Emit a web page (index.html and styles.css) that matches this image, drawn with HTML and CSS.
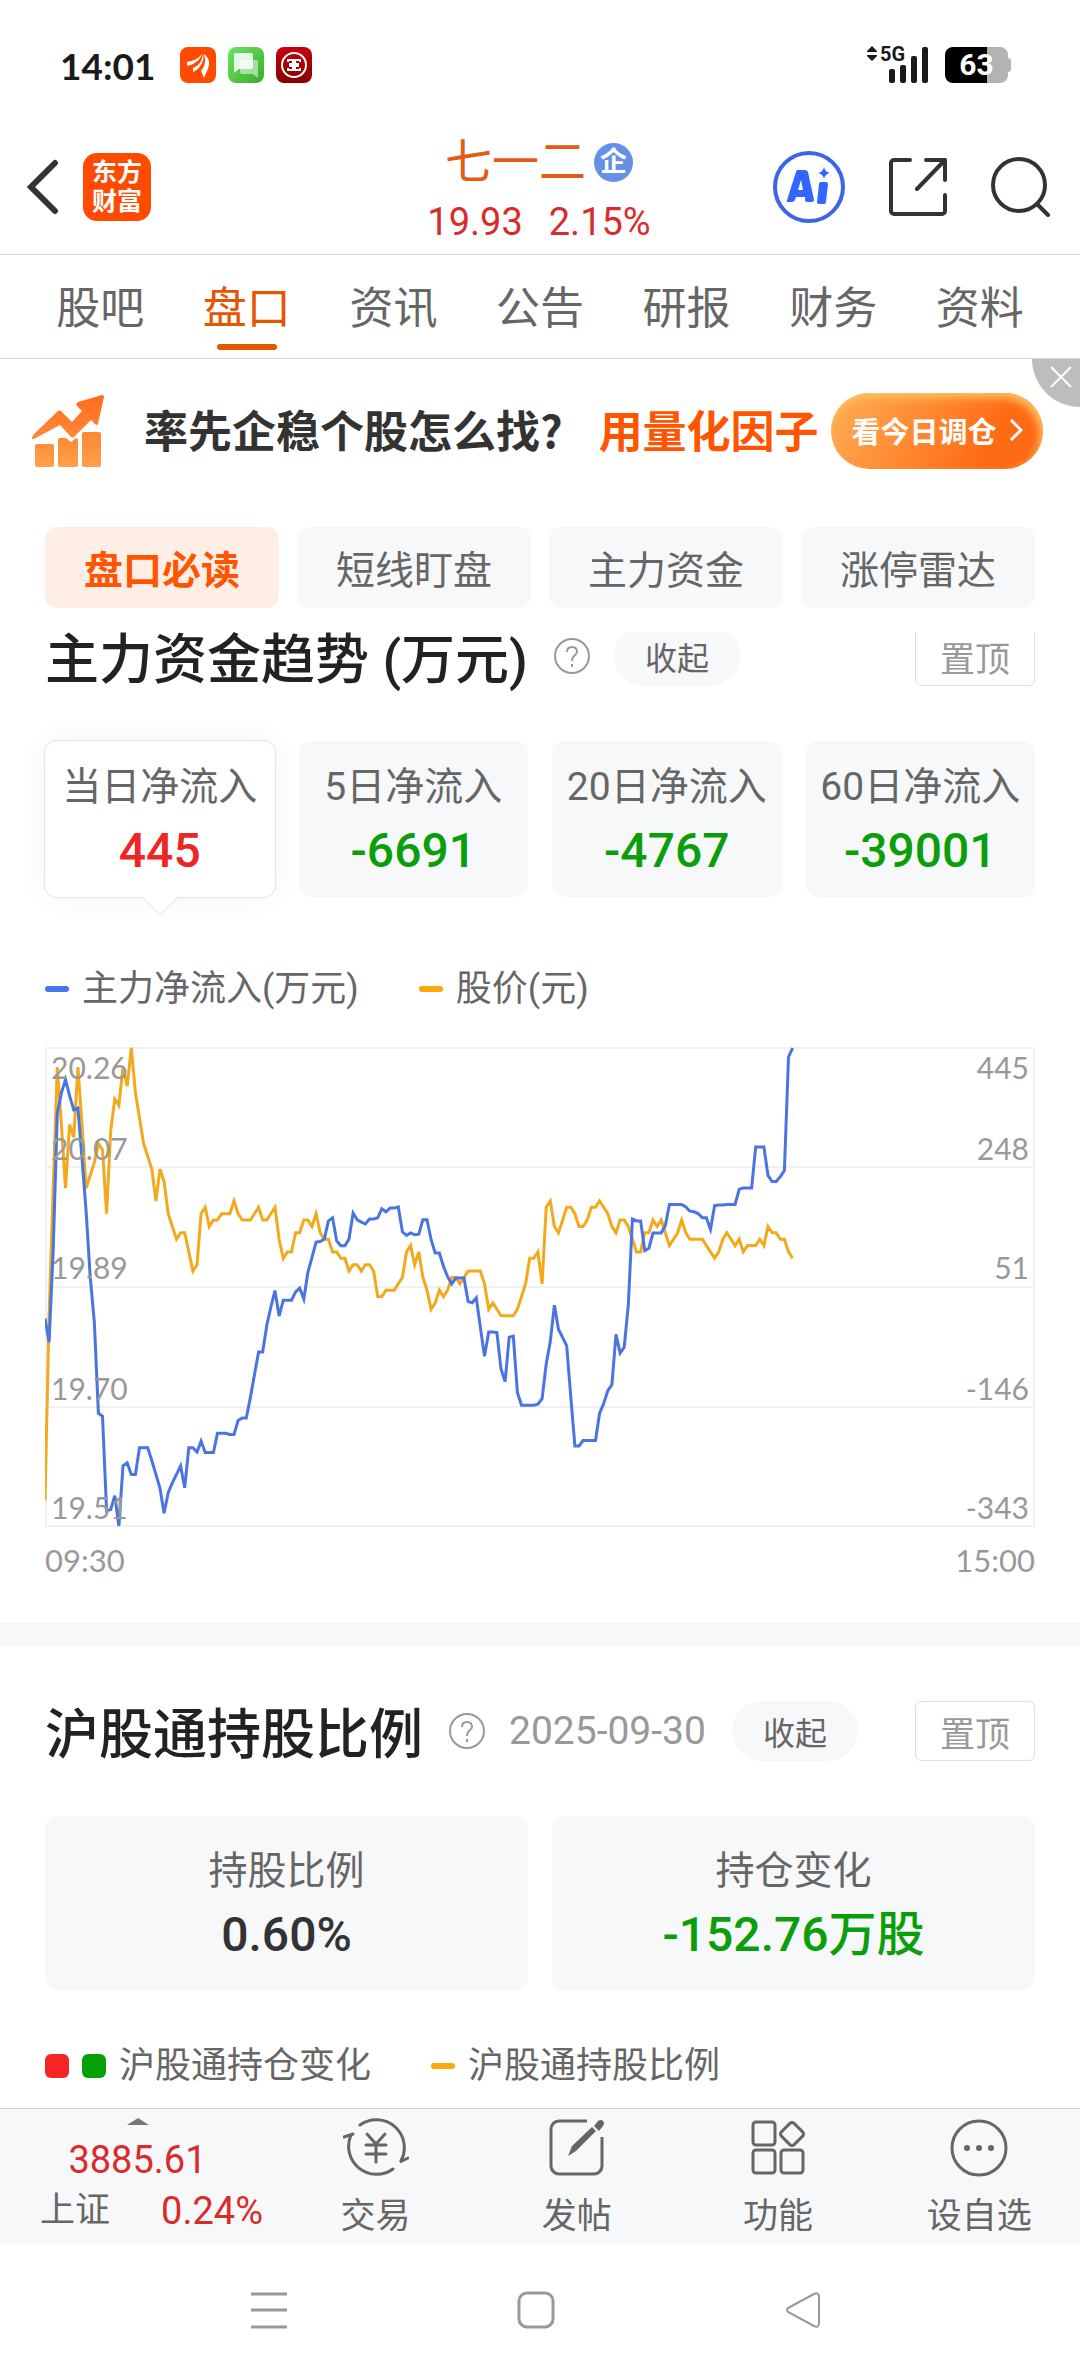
FILE: index.html
```html
<!DOCTYPE html>
<html lang="zh-CN">
<head>
    <meta charset="UTF-8">
    <title>七一二 - 盘口</title>
    <meta name="viewport" content="width=device-width, initial-scale=1">
    <link rel="stylesheet" href="styles.css">
</head>
<body>
    <div class="status-bar">
        <span class="clock">14:01</span>
        <svg class="app-icon" viewBox="0 0 36 36">
            <rect width="36" height="36" rx="8" fill="#ff4a00"/>
            <path d="M7 15c6-1 11-3 15-8-2 6-7 10-15 12zM13 21c6-2 9-7 10-14 2 7-3 15-10 18zM21 24c4-5 5-10 3-17 5 4 7 9 3 17l-3 7z" fill="#fff"/>
        </svg>
        <svg class="app-icon" viewBox="0 0 36 36">
            <defs>
                <linearGradient id="msgGreen" x1="0" y1="0" x2="1" y2="1">
                    <stop offset="0" stop-color="#6be364"/>
                    <stop offset="1" stop-color="#3aae29"/>
                </linearGradient>
            </defs>
            <rect width="36" height="36" rx="8" fill="url(#msgGreen)"/>
            <path d="M12 13h16a2 2 0 0 1 2 2v16l-5-4H14a2 2 0 0 1-2-2z" fill="#fff" opacity=".5"/>
            <path d="M8 6h15a2 2 0 0 1 2 2v12a2 2 0 0 1-2 2H11l-5 4V8a2 2 0 0 1 2-2z" fill="#fff" opacity=".85"/>
        </svg>
        <svg class="app-icon" viewBox="0 0 36 36">
            <defs>
                <linearGradient id="bankRed" x1="0" y1="0" x2="0" y2="1">
                    <stop offset="0" stop-color="#c8000f"/>
                    <stop offset="1" stop-color="#860000"/>
                </linearGradient>
            </defs>
            <rect width="36" height="36" rx="8" fill="url(#bankRed)"/>
            <circle cx="18" cy="18" r="12" fill="none" stroke="#fff" stroke-width="2"/>
            <path d="M12 13h5v4h-4M13 19h4v4h-5M24 13h-5v4h4M23 19h-4v4h5M12 12v3M24 12v3M12 24v-3M24 24v-3" fill="none" stroke="#fff" stroke-width="2"/>
        </svg>
        <span class="spacer"></span>
        <svg class="signal" viewBox="0 -5 62 50" fill="#1a1a1a">
            <path d="M5 1l5 5H0zM5 16l5-5H0z"/>
            <path d="M0 6h10v1H0zM0 10h10v1H0z"/>
            <text x="13" y="16" class="signal-text">5G</text>
            <rect x="22" y="24" width="6" height="14" rx="2"/>
            <rect x="33" y="20" width="6" height="18" rx="2"/>
            <rect x="44" y="11" width="6" height="27" rx="2"/>
            <rect x="55" y="2" width="6" height="36" rx="2"/>
        </svg>
        <span class="battery">63</span>
    </div>

    <header class="top-bar">
        <div class="top-left">
            <button class="icon-btn" aria-label="返回">
                <svg width="32" height="56" viewBox="0 0 32 56"><path d="M28 4L4 28l24 24" fill="none" stroke="#333" stroke-width="6" stroke-linecap="round"/></svg>
            </button>
            <a href="#" class="logo"><span>东方</span><span>财富</span></a>
        </div>
        <div class="stock">
            <h1 class="stock-name">七一二<span class="badge">企</span></h1>
            <div class="stock-price"><span>19.93</span><span>2.15%</span></div>
        </div>
        <div class="top-right">
            <button class="icon-btn" aria-label="AI">
                <svg width="72" height="72" viewBox="0 0 72 72">
                    <circle cx="36" cy="36" r="34" fill="none" stroke="#3b66e8" stroke-width="4"/>
                    <path d="M25 19h7q2 0 3 2l6 28q0 2-2 2h-5q-2 0-2-2v-3h-9l-1 3q-1 2-3 2h-4q-2 0-1-2l9-28q0-2 2-2zM28 29l-3 10h5z" fill="#3366ff" fill-rule="evenodd"/>
                    <path d="M48 31h5q2 0 2 2l-2 18q0 2-2 2h-5q-2 0-2-2l2-18q0-2 2-2zM51 16q1 5 6 6-5 1-6 6-1-5-6-6 5-1 6-6z" fill="#3366ff"/>
                </svg>
            </button>
            <button class="icon-btn" aria-label="分享">
                <svg width="58" height="58" viewBox="0 0 58 58" fill="none" stroke="#333" stroke-width="4" stroke-linecap="round" stroke-linejoin="round">
                    <path d="M21 2H5a3 3 0 0 0-3 3v48a3 3 0 0 0 3 3h48a3 3 0 0 0 3-3V37M37 2h19v20M56 2L28 31"/>
                </svg>
            </button>
            <button class="icon-btn" aria-label="搜索">
                <svg width="60" height="60" viewBox="0 0 60 60" fill="none" stroke="#333" stroke-width="4" stroke-linecap="round">
                    <circle cx="28" cy="28" r="26"/>
                    <path d="M46 47l11 11"/>
                </svg>
            </button>
        </div>
    </header>

    <nav class="tabs">
        <a href="#">股吧</a>
        <a href="#" class="active">盘口</a>
        <a href="#">资讯</a>
        <a href="#">公告</a>
        <a href="#">研报</a>
        <a href="#">财务</a>
        <a href="#">资料</a>
    </nav>

    <div class="banner">
        <svg class="banner-icon" viewBox="0 0 72 72">
            <defs>
                <linearGradient id="bannerOrange" x1="0" y1="0" x2="0" y2="1">
                    <stop offset="0" stop-color="#ff6a1c"/>
                    <stop offset="1" stop-color="#ffa04a"/>
                </linearGradient>
            </defs>
            <path d="M70 0q2 0 2 2l-6 27q-1 2-3 0l-4-4-17 17q-1 1-3 0L28 30 2 44q-2 1-2-1 0-2 2-4l24-23q1-1 3 0l11 11 10-11-5-5q-2-2 1-4zM5 49h15q2 0 2 2v19q0 2-2 2H5q-2 0-2-2V51q0-2 2-2zM28 43h6l5 4 5-4q2 0 2 2v25q0 2-2 2H28q-2 0-2-2V45q0-2 2-2zM52 37h15q2 0 2 2v31q0 2-2 2H52q-2 0-2-2V39q0-2 2-2z" fill="url(#bannerOrange)"/>
        </svg>
        <p class="banner-text">率先企稳个股怎么找? <em>用量化因子</em></p>
        <a href="#" class="banner-btn">看今日调仓
            <svg width="14" height="24" viewBox="0 0 14 24"><path d="M2 2l10 10L2 22" fill="none" stroke="#fff" stroke-width="3"/></svg>
        </a>
        <button class="banner-close" aria-label="关闭">
            <svg width="22" height="22" viewBox="0 0 22 22"><path d="M1 1l20 20M21 1L1 21" stroke="#fff" stroke-width="2"/></svg>
        </button>
    </div>

    <div class="chips">
        <button class="chip active">盘口必读</button>
        <button class="chip">短线盯盘</button>
        <button class="chip">主力资金</button>
        <button class="chip">涨停雷达</button>
    </div>

    <main>
        <section class="panel panel-trend">
            <div class="panel-head">
                <h2>主力资金趋势 (万元)</h2>
                <svg class="help" viewBox="0 0 36 36" fill="none" stroke="#999" stroke-width="2">
                    <circle cx="18" cy="18" r="17"/>
                    <path d="M13 14q0-5 5-5t5 5q0 2-3 4-2 2-2 5M18 26v3"/>
                </svg>
                <button class="fold">收起</button>
                <button class="pin">置顶</button>
            </div>
            <div class="flow-cards">
                <button class="card selected"><span>当日净流入</span><strong class="up">445</strong></button>
                <button class="card"><span>5日净流入</span><strong class="down">-6691</strong></button>
                <button class="card"><span>20日净流入</span><strong class="down">-4767</strong></button>
                <button class="card"><span>60日净流入</span><strong class="down">-39001</strong></button>
            </div>
            <div class="legend">
                <span class="legend-item"><i class="dash blue"></i>主力净流入(万元)</span>
                <span class="legend-item"><i class="dash orange"></i>股价(元)</span>
            </div>
            <svg class="chart" viewBox="0 0 990 480">
                <path class="grid" d="M1 1h988v478H1zM1 120h988M1 240h988M1 360h988"/>
                <polyline id="priceLine" class="line price"/>
                <polyline id="flowLine" class="line flow"/>
                <g class="axis">
                    <text x="6" y="32">20.26</text>
                    <text x="6" y="113">20.07</text>
                    <text x="6" y="232">19.89</text>
                    <text x="6" y="353">19.70</text>
                    <text x="6" y="472">19.51</text>
                </g>
                <g class="axis axis-right">
                    <text x="984" y="32">445</text>
                    <text x="984" y="113">248</text>
                    <text x="984" y="232">51</text>
                    <text x="984" y="353">-146</text>
                    <text x="984" y="472">-343</text>
                </g>
            </svg>
            <div class="times"><span>09:30</span><span>15:00</span></div>
        </section>

        <section class="panel panel-holding">
            <div class="panel-head">
                <h2>沪股通持股比例</h2>
                <svg class="help" viewBox="0 0 36 36" fill="none" stroke="#999" stroke-width="2">
                    <circle cx="18" cy="18" r="17"/>
                    <path d="M13 14q0-5 5-5t5 5q0 2-3 4-2 2-2 5M18 26v3"/>
                </svg>
                <time>2025-09-30</time>
                <button class="fold">收起</button>
                <button class="pin">置顶</button>
            </div>
            <div class="holding-cards">
                <div class="card"><span>持股比例</span><strong>0.60%</strong></div>
                <div class="card"><span>持仓变化</span><strong class="down">-152.76万股</strong></div>
            </div>
            <div class="legend">
                <span class="legend-item"><i class="square red"></i><i class="square green"></i>沪股通持仓变化</span>
                <span class="legend-item"><i class="dash orange"></i>沪股通持股比例</span>
            </div>
        </section>
    </main>

    <footer class="tool-bar">
        <a href="#" class="index-box">
            <svg width="22" height="7" viewBox="0 0 22 7"><path d="M0 7L11 0l11 7z" fill="#777"/></svg>
            <span class="index-value">3885.61</span>
            <span class="index-row"><span>上证</span><span class="index-change">0.24%</span></span>
        </a>
        <a href="#" class="tool">
            <svg width="66" height="60" viewBox="0 0 66 60" fill="none" stroke="#666" stroke-width="3" stroke-linecap="round">
                <path d="M17 8a28 28 0 0 1 41 36M58 44l-1 1 8-4M50 52A28 28 0 0 1 8 18M1 20l9-3"/>
                <path d="M24 17l9 10 9-10M23 28h20M23 37h20M33 28v17"/>
            </svg>
            <span>交易</span>
        </a>
        <a href="#" class="tool">
            <svg width="56" height="60" viewBox="0 0 56 60">
                <path d="M38 4H10a8 8 0 0 0-8 8v37a8 8 0 0 0 8 8h35a8 8 0 0 0 8-8V20" fill="none" stroke="#666" stroke-width="3"/>
                <path d="M19 39l4-10 20-19 4 4-20 20zM45 9l4-5q3-2 5 0t0 5l-4 5z" fill="#666"/>
            </svg>
            <span>发帖</span>
        </a>
        <a href="#" class="tool">
            <svg width="56" height="60" viewBox="0 0 56 60" fill="none" stroke="#666" stroke-width="3" stroke-linejoin="round">
                <rect x="3" y="5" width="22" height="23" rx="3"/>
                <rect x="3" y="33" width="22" height="23" rx="3"/>
                <rect x="31" y="33" width="22" height="23" rx="3"/>
                <rect x="33" y="8" width="18" height="18" rx="3" transform="rotate(45 42 17)"/>
            </svg>
            <span>功能</span>
        </a>
        <a href="#" class="tool">
            <svg width="60" height="60" viewBox="0 0 60 60">
                <circle cx="30" cy="31" r="27" fill="none" stroke="#666" stroke-width="3"/>
                <g fill="#666"><circle cx="18" cy="31" r="3"/><circle cx="30" cy="31" r="3"/><circle cx="42" cy="31" r="3"/></g>
            </svg>
            <span>设自选</span>
        </a>
    </footer>

    <div class="system-nav">
        <button class="icon-btn" aria-label="最近任务">
            <svg width="36" height="38" viewBox="0 0 36 38"><path d="M0 3h36M0 19h36M0 36h36" stroke="#999" stroke-width="3"/></svg>
        </button>
        <button class="icon-btn" aria-label="主屏幕">
            <svg width="38" height="38" viewBox="0 0 38 38"><rect x="2" y="2" width="34" height="34" rx="8" fill="none" stroke="#999" stroke-width="3"/></svg>
        </button>
        <button class="icon-btn" aria-label="后退">
            <svg width="36" height="38" viewBox="0 0 36 38"><path d="M3 17L29 3q4-2 5 2v28q-1 4-5 2L3 21q-2-2 0-4z" fill="none" stroke="#999" stroke-width="2"/></svg>
        </button>
    </div>

    <script>
        // 每分钟一个点，全天 241 个点
        const MINUTES = 241;
        const WIDTH = 990;
        const HEIGHT = 478;

        // 股价：距最高价 20.26 的差值（分）
        const price = [71, 42, 22, 3, 12, 22, 12, 14, 3, 12, 22, 20, 18, 15, 16, 26, 13, 8, 9, 3,
            6, 0, 7, 11, 15, 17, 19, 24, 19, 21, 26, 28, 30, 29, 29, 32, 35, 34, 26, 25,
            28, 27, 27, 26, 26, 26, 24, 26, 27, 27, 27, 26, 25, 27, 27, 26, 25, 30, 33, 32,
            32, 29, 29, 27, 27, 28, 26, 29, 30, 30, 32, 32, 33, 33, 35, 34, 34, 35, 34, 34,
            35, 39, 39, 38, 38, 38, 37, 36, 32, 31, 34, 32, 36, 38, 41, 40, 38, 39, 38, 36,
            36, 37, 36, 35, 35, 35, 35, 37, 41, 40, 41, 42, 42, 42, 42, 41, 39, 37, 33, 33,
            32, 37, 25, 24, 28, 29, 27, 25, 25, 26, 28, 28, 27, 25, 25, 24, 25, 26, 28, 29,
            27, 27, 28, 30, 32, 32, 29, 29, 27, 28, 27, 29, 31, 30, 29, 27, 29, 30, 30, 30,
            30, 31, 32, 33, 32, 30, 29, 30, 31, 30, 32, 31, 31, 31, 30, 31, 28, 29, 29, 30,
            30, 32, 33];

        // 主力净流入（万元）
        const flow = [-1, -40, 112, 337, 371, 393, 366, 343, 346, 263, 176, 68, -6, -157, -162, -318, -316, -293, -343, -244,
            -239, -258, -258, -214, -214, -214, -235, -258, -281, -322, -288, -272, -258, -244, -280, -214, -214, -221, -203, -222,
            -222, -222, -190, -190, -190, -192, -192, -169, -165, -165, -131, -93, -56, -56, -12, 18, 45, 3, 29, 29,
            29, 43, 49, 31, 75, 100, 125, 126, 130, 160, 165, 127, 119, 119, 130, 173, 162, 158, 155, 163,
            163, 165, 180, 175, 181, 181, 183, 142, 136, 140, 137, 138, 162, 162, 129, 107, 107, 85, 68, 56,
            66, 66, 66, 27, 25, 33, -16, -63, -23, -23, -24, -84, -105, -32, -30, -123, -144, -144, -144, -144,
            -142, -133, -76, -39, 21, -19, -32, -46, -130, -211, -211, -202, -202, -202, -202, -157, -141, -120, -110, -27,
            -58, -48, 21, 163, 160, 160, 111, 115, 140, 140, 140, 152, 187, 187, 187, 187, 183, 176, 175, 172,
            165, 165, 146, 185, 186, 186, 187, 187, 187, 212, 214, 214, 214, 282, 282, 282, 235, 225, 225, 233,
            243, 430, 445];

        function drawLine(id, data, top, bottom) {
            const points = data.map((v, i) => {
                const x = i * WIDTH / MINUTES;
                const y = 1 + (top - v) / (top - bottom) * HEIGHT;
                return x.toFixed(1) + ',' + y.toFixed(1);
            });
            document.getElementById(id).setAttribute('points', points.join(' '));
        }

        drawLine('priceLine', price, 0, 75);
        drawLine('flowLine', flow, 445, -343);
    </script>
</body>
</html>
```
FILE: styles.css
```css
* {
    box-sizing: border-box;
}

body {
    margin: 0;
    min-height: 100vh;
    display: flex;
    flex-direction: column;
    background: #fff;
    color: #666;
    font-family: Roboto, "Noto Sans CJK SC", sans-serif;
}

h1, h2, p {
    margin: 0;
}

a {
    color: inherit;
    text-decoration: none;
}

button {
    padding: 0;
    border: none;
    background: none;
    color: inherit;
    font-family: inherit;
    cursor: pointer;
}

svg {
    display: block;
    flex: none;
}

.icon-btn {
    display: flex;
}

/* 状态栏 */
.status-bar {
    display: flex;
    align-items: center;
    height: 130px;
    padding: 0 72px 0 60px;
}

.clock {
    margin-right: 25px;
    color: #1a1a1a;
    font-family: Lato, sans-serif;
    font-size: 37px;
    font-weight: 700;
}

.app-icon {
    width: 36px;
    height: 36px;
    margin-right: 12px;
}

.spacer {
    flex: 1;
}

.signal {
    width: 62px;
    height: 50px;
    margin-right: 16px;
}

.signal-text {
    font-size: 20px;
    font-weight: 700;
}

.battery {
    position: relative;
    width: 63px;
    height: 36px;
    border-radius: 8px;
    background: linear-gradient(90deg, #000 67%, #b3b3b3 67%);
    color: #fff;
    font-size: 30px;
    font-weight: 700;
    line-height: 36px;
    text-align: center;
}

.battery::after {
    content: "";
    position: absolute;
    top: 11px;
    right: -3px;
    width: 3px;
    height: 14px;
    border-radius: 0 3px 3px 0;
    background: #b3b3b3;
}

/* 顶部标题 */
.top-bar {
    display: grid;
    grid-template-columns: 1fr auto 1fr;
    align-items: center;
    height: 125px;
    padding: 0 29px 0 27px;
    border-bottom: 1px solid #d4d4d4;
}

.top-left {
    display: flex;
    align-items: center;
    gap: 24px;
    padding-bottom: 10px;
}

.top-right {
    display: flex;
    align-items: center;
    justify-content: flex-end;
    gap: 44px;
    padding-bottom: 10px;
}

.logo {
    display: flex;
    flex-direction: column;
    align-items: center;
    justify-content: center;
    width: 68px;
    height: 68px;
    border-radius: 14px;
    background: #ff4a00;
    color: #fff;
    font-size: 25px;
    font-weight: 700;
    line-height: 29px;
}

.stock-name {
    display: flex;
    align-items: center;
    justify-content: center;
    gap: 8px;
    color: #e65a14;
    font-size: 47px;
    font-weight: 400;
    line-height: 60px;
}

.badge {
    width: 39px;
    height: 39px;
    border-radius: 50%;
    background: #6490e8;
    color: #fff;
    font-size: 27px;
    font-weight: 700;
    line-height: 38px;
    text-align: center;
}

.stock-price {
    display: flex;
    justify-content: center;
    gap: 26px;
    color: #d92b2b;
    font-size: 38px;
    line-height: 60px;
}

/* 标签页 */
.tabs {
    display: flex;
    height: 104px;
    padding: 0 27px;
    border-bottom: 1px solid #d4d4d4;
    font-size: 44px;
    line-height: 108px;
}

.tabs a {
    position: relative;
    flex: 1;
    text-align: center;
}

.tabs .active {
    color: #e65500;
}

.tabs .active::after {
    content: "";
    position: absolute;
    left: 50%;
    bottom: 8px;
    width: 60px;
    height: 6px;
    margin-left: -30px;
    border-radius: 3px;
    background: #e65500;
}

/* 广告条 */
.banner {
    position: relative;
    display: flex;
    align-items: center;
    height: 144px;
    padding: 0 37px 0 32px;
}

.banner-icon {
    width: 72px;
    height: 72px;
    margin-right: 40px;
}

.banner-text {
    flex: 1;
    display: flex;
    gap: 36px;
    padding-bottom: 4px;
    color: #333;
    font-family: "Noto Sans CJK SC", sans-serif;
    font-size: 44px;
    font-weight: 700;
    white-space: nowrap;
}

.banner-text em {
    color: #ff5500;
    font-style: normal;
}

.banner-btn {
    display: flex;
    align-items: center;
    justify-content: center;
    gap: 12px;
    width: 212px;
    height: 76px;
    padding-bottom: 3px;
    border-radius: 38px;
    background: linear-gradient(120deg, #ffa64d 10%, #ff6a14 75%);
    box-shadow: inset -3px 5px 8px #ffc060;
    color: #fff;
    font-size: 29px;
    font-weight: 700;
}

.banner-close {
    position: absolute;
    top: 0;
    right: 0;
    display: flex;
    align-items: center;
    justify-content: center;
    width: 48px;
    height: 48px;
    padding: 0 0 12px 10px;
    border-bottom-left-radius: 48px;
    background: #bdbdbd;
}

/* 分类按钮 */
.chips {
    display: grid;
    grid-template-columns: repeat(4, 1fr);
    gap: 18px;
    padding: 24px 45px;
}

.chip {
    height: 81px;
    padding-bottom: 2px;
    border-radius: 12px;
    background: #f7f8fa;
    font-size: 39px;
}

.chip.active {
    background: #ffeee6;
    color: #ff5500;
    font-weight: 700;
}

/* 面板 */
main {
    flex: 1;
}

.panel {
    padding: 0 45px;
}

.panel-trend {
    overflow: hidden;
    padding-bottom: 42px;
    border-bottom: 24px solid #f7f8fa;
}

.panel-trend .panel-head {
    margin-top: -6px;
}

.panel-holding {
    padding-top: 54px;
    padding-bottom: 22px;
}

.panel-head {
    display: flex;
    align-items: center;
    height: 60px;
    margin-bottom: 55px;
}

.panel-head h2 {
    margin-right: 26px;
    padding-top: 10px;
    color: #222;
    font-size: 54px;
    font-weight: 500;
    line-height: 48px;
    white-space: nowrap;
}

.help {
    width: 36px;
    height: 36px;
    margin-right: 24px;
}

.panel-head time {
    margin-right: 26px;
    color: #999;
    font-size: 39px;
}

.fold {
    width: 126px;
    height: 60px;
    border-radius: 30px;
    background: #f7f8fa;
    font-size: 32px;
}

.pin {
    width: 120px;
    height: 60px;
    margin-left: auto;
    border: 1px solid #ddd;
    border-radius: 6px;
    color: #999;
    font-size: 35px;
}

.flow-cards {
    display: grid;
    grid-template-columns: repeat(4, 1fr);
    gap: 24px;
}

.holding-cards {
    display: grid;
    grid-template-columns: repeat(2, 1fr);
    gap: 24px;
}

.card {
    position: relative;
    display: flex;
    flex-direction: column;
    align-items: center;
    padding: 14px 0;
    border-radius: 12px;
    background: #f7f8fa;
    font-size: 39px;
    line-height: 64px;
    white-space: nowrap;
}

.card strong {
    color: #333;
    font-size: 48px;
    font-weight: 500;
}

.holding-cards .card {
    padding: 23px 0;
}

.card .up {
    color: #ee2525;
}

.card .down {
    color: #0a9e0a;
}

.card.selected {
    background: #fff;
    box-shadow: 0 0 0 1px #e5e5e5, 0 0 30px #0000000d;
}

.card.selected::after {
    content: "";
    position: absolute;
    left: 50%;
    bottom: -13px;
    width: 26px;
    height: 26px;
    margin-left: -13px;
    border: solid #e5e5e5;
    border-width: 0 1px 1px 0;
    background: #fff;
    transform: rotate(45deg);
}

.legend {
    display: flex;
    gap: 60px;
    font-size: 36px;
    line-height: 40px;
}

.panel-trend .legend {
    margin: 72px 0 38px;
}

.panel-holding .legend {
    margin-top: 56px;
}

.legend-item {
    display: flex;
    align-items: center;
    gap: 13px;
}

.dash {
    width: 24px;
    height: 6px;
    border-radius: 3px;
}

.square {
    width: 24px;
    height: 24px;
    border-radius: 6px;
}

.blue {
    background: #4a74f0;
}

.orange {
    background: #fba90a;
}

.red {
    background: #f52525;
}

.green {
    background: #05a005;
}

/* 走势图 */
.chart {
    width: 100%;
    height: auto;
}

.grid {
    fill: none;
    stroke: #f0f0f0;
    stroke-width: 2;
}

.line {
    fill: none;
    stroke-width: 3;
}

.price {
    stroke: #f2a91c;
}

.flow {
    stroke: #4a74e0;
}

.axis {
    fill: #999;
    font-family: Lato, sans-serif;
    font-size: 30px;
}

.axis-right {
    text-anchor: end;
}

.times {
    display: flex;
    justify-content: space-between;
    margin-top: 13px;
    margin-bottom: 1px;
    color: #999;
    font-family: Lato, sans-serif;
    font-size: 31px;
    line-height: 40px;
}

/* 底部工具栏 */
.tool-bar {
    display: flex;
    height: 136px;
    border-top: 1px solid #d0d3d8;
    background: #f7f8fa;
    font-size: 35px;
}

.index-box {
    display: flex;
    flex-direction: column;
    align-items: center;
    width: 275px;
    padding-top: 9px;
}

.index-value {
    color: #d92b2b;
    font-size: 38px;
    line-height: 70px;
}

.index-row {
    display: flex;
    gap: 51px;
    padding-left: 28px;
    line-height: 32px;
}

.index-change {
    color: #d92b2b;
    font-size: 38px;
}

.tool {
    flex: 1;
    display: flex;
    flex-direction: column;
    align-items: center;
    gap: 4px;
    padding-top: 8px;
    line-height: 72px;
}

.system-nav {
    display: flex;
    justify-content: space-around;
    align-items: center;
    height: 132px;
    padding: 0 144px 0 136px;
}
```
